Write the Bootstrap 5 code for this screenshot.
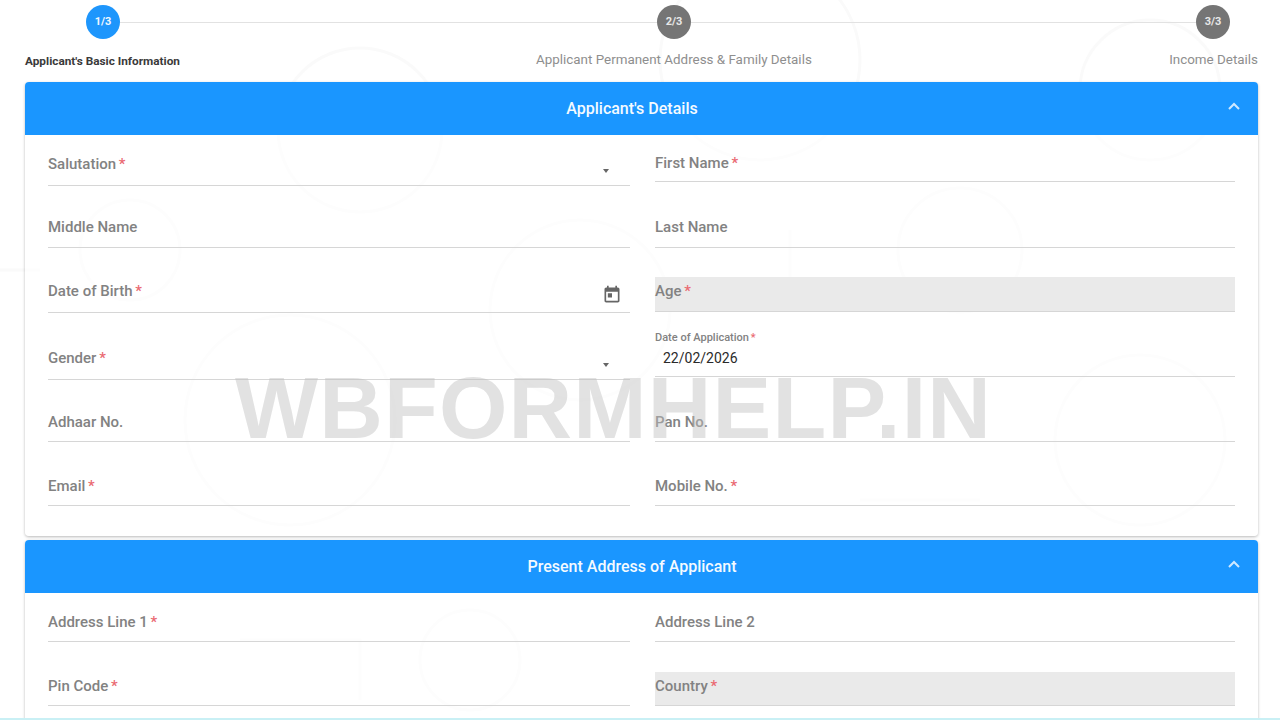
<!DOCTYPE html>
<html lang="en">
<head>
<meta charset="utf-8">
<title>Application</title>
<link href="https://cdn.jsdelivr.net/npm/bootstrap@5.3.0/dist/css/bootstrap.min.css" rel="stylesheet">
<style>
html,body{height:720px;overflow:hidden;background:#fff;}
body{font-family:Roboto,"Liberation Sans",sans-serif;position:relative;}
.doodles{position:absolute;inset:0;z-index:0;}
.doodles *{fill:none;stroke:#fafafa;stroke-width:3;}
.pagewrap{position:relative;z-index:1;padding:5px 22px 0 25px;}
.stepline{position:relative;height:34px;}
.stepline::before{content:"";position:absolute;left:78px;right:28px;top:17px;height:1px;background:#e2e2e2;}
.stepdot{position:relative;width:34px;height:34px;border-radius:50%;background:#757575;color:#e8e8e8;font-size:11px;font-weight:700;}
.stepdot.on{background:#1e96fc;color:#f0f7ff;}
.dot1{margin-left:61px;}
.dot2{margin-left:537px;}
.dot3{margin-right:28px;}
.steplabels{height:43px;padding-top:13px;font-size:13.4px;line-height:16px;color:#8e8e8e;}
.steplabels .cur{font-size:11.8px;line-height:19px;font-weight:700;color:#3a3a3a;}
.stepmid{margin-left:356px;}
.panel{border:0;border-radius:4px;background:rgba(255,255,255,.55);box-shadow:0 1px 3px rgba(0,0,0,.28);}
.panelhead{height:53px;padding-right:19px;background:#1a96ff;color:#f4faff;border-radius:4px 4px 0 0;font-size:16px;font-weight:500;position:relative;}
.chev{position:absolute;right:18px;top:20px;width:12px;height:8px;}
.panelbody{padding:0 23px;}
.panelbody .row{--bs-gutter-x:25px;}
.rh49{height:49px}.rh51{height:51px}.rh62{height:62px}.rh64{height:64px}.rh65{height:65px}.rh67{height:67px}
.fld{position:relative;display:flex;align-items:flex-end;border-bottom:1px solid #d6d6d6;font-size:15px;font-weight:500;color:#828282;line-height:18px;}
.fl{margin-right:-1px;height:100%;}
.fr{margin-left:1px;height:100%;}
.fr.first{height:47px;}
.pb9{padding-bottom:9px}.pb10{padding-bottom:10px}.pb11{padding-bottom:11px}.pb12{padding-bottom:12px}
.req{color:#ea6a72;margin-left:-1px;}
.off{background:#eaeaea;}
.fr.ageblock{height:35px;margin-top:29px;}
.fr.ctry{height:34px;margin-top:30px;}
.fr.stacked{display:block;padding-top:18px;height:64px;}
.tiny{font-size:11px;line-height:14px;display:block;}
.val{font-size:14px;font-weight:400;color:#2a2a2a;padding-left:8px;display:block;line-height:18px;margin-top:4px;}
.caret2{position:absolute;right:21px;bottom:12px;width:0;height:0;border-left:3.5px solid transparent;border-right:3.5px solid transparent;border-top:4px solid #666;}
.cal{position:absolute;right:8px;bottom:7px;width:20px;height:20px;fill:#666;}
.watermark{position:absolute;left:235px;top:358px;z-index:5;font-family:"Liberation Sans",Arial,sans-serif;font-size:88px;font-weight:700;line-height:100px;letter-spacing:1.2px;color:rgba(190,190,190,.45);white-space:nowrap;}
.edge{position:absolute;left:0;right:0;bottom:0;height:2px;background:#c9f0f5;z-index:6;}
.endgap{padding-bottom:30px;}
.second{margin-top:4px;padding-bottom:30px;}
</style>
</head>
<body>
<svg class="doodles" width="1280" height="720" viewBox="0 0 1280 720">
<circle cx="360" cy="130" r="82"/><circle cx="290" cy="420" r="105"/><circle cx="580" cy="310" r="90"/>
<circle cx="960" cy="250" r="62"/><circle cx="1140" cy="440" r="85"/><circle cx="470" cy="660" r="50"/>
<circle cx="760" cy="60" r="100"/><circle cx="1150" cy="90" r="70"/><circle cx="130" cy="250" r="50"/>
<path d="M0 270h40M790 230v80M860 500h120M240 640h120v60"/>
</svg>
<div class="pagewrap">
  <div class="stepline d-flex">
    <div class="stepdot on dot1 d-flex align-items-center justify-content-center">1/3</div>
    <div class="stepdot dot2 d-flex align-items-center justify-content-center">2/3</div>
    <div class="stepdot dot3 ms-auto d-flex align-items-center justify-content-center">3/3</div>
  </div>
  <div class="steplabels d-flex">
    <span class="cur">Applicant's Basic Information</span>
    <span class="stepmid">Applicant Permanent Address &amp; Family Details</span>
    <span class="ms-auto">Income Details</span>
  </div>

  <div class="card panel">
    <div class="panelhead d-flex align-items-center justify-content-center">Applicant's Details
      <svg class="chev" viewBox="0 0 12 8"><path d="M1 7l5-5 5 5" fill="none" stroke="#cfe8ff" stroke-width="2"/></svg></div>
    <div class="panelbody endgap">
      <div class="row rh51">
        <div class="col-6"><div class="fld fl pb12"><span>Salutation <span class="req">*</span></span><i class="caret2"></i></div></div>
        <div class="col-6"><div class="fld fr first pb9"><span>First Name <span class="req">*</span></span></div></div>
      </div>
      <div class="row rh62">
        <div class="col-6"><div class="fld fl pb11"><span>Middle Name</span></div></div>
        <div class="col-6"><div class="fld fr pb11"><span>Last Name</span></div></div>
      </div>
      <div class="row rh65">
        <div class="col-6"><div class="fld fl pb12"><span>Date of Birth <span class="req">*</span></span>
          <svg class="cal" viewBox="0 0 24 24"><path d="M19 3h-1V1h-2v2H8V1H6v2H5c-1.11 0-1.99.9-1.99 2L3 19c0 1.1.89 2 2 2h14c1.1 0 2-.9 2-2V5c0-1.1-.9-2-2-2zm0 16H5V8h14v11zM7 10h5v5H7z"/></svg></div></div>
        <div class="col-6"><div class="fld fr off ageblock pb11"><span>Age <span class="req">*</span></span></div></div>
      </div>
      <div class="row rh67">
        <div class="col-6"><div class="fld fl pb12"><span>Gender <span class="req">*</span></span><i class="caret2"></i></div></div>
        <div class="col-6"><div class="fld fr stacked"><span class="tiny">Date of Application <span class="req">*</span></span><span class="val">22/02/2026</span></div></div>
      </div>
      <div class="row rh62">
        <div class="col-6"><div class="fld fl pb10"><span>Adhaar No.</span></div></div>
        <div class="col-6"><div class="fld fr pb10"><span>Pan No.</span></div></div>
      </div>
      <div class="row rh64">
        <div class="col-6"><div class="fld fl pb10"><span>Email <span class="req">*</span></span></div></div>
        <div class="col-6"><div class="fld fr pb10"><span>Mobile No. <span class="req">*</span></span></div></div>
      </div>
    </div>
  </div>

  <div class="card panel second">
    <div class="panelhead d-flex align-items-center justify-content-center">Present Address of Applicant
      <svg class="chev" viewBox="0 0 12 8"><path d="M1 7l5-5 5 5" fill="none" stroke="#cfe8ff" stroke-width="2"/></svg></div>
    <div class="panelbody">
      <div class="row rh49">
        <div class="col-6"><div class="fld fl pb10"><span>Address Line 1 <span class="req">*</span></span></div></div>
        <div class="col-6"><div class="fld fr pb10"><span>Address Line 2</span></div></div>
      </div>
      <div class="row rh64">
        <div class="col-6"><div class="fld fl pb10"><span>Pin Code <span class="req">*</span></span></div></div>
        <div class="col-6"><div class="fld fr off ctry pb10"><span>Country <span class="req">*</span></span></div></div>
      </div>
    </div>
  </div>
</div>
<div class="watermark">WBFORMHELP.IN</div>
<div class="edge"></div>
</body>
</html>
